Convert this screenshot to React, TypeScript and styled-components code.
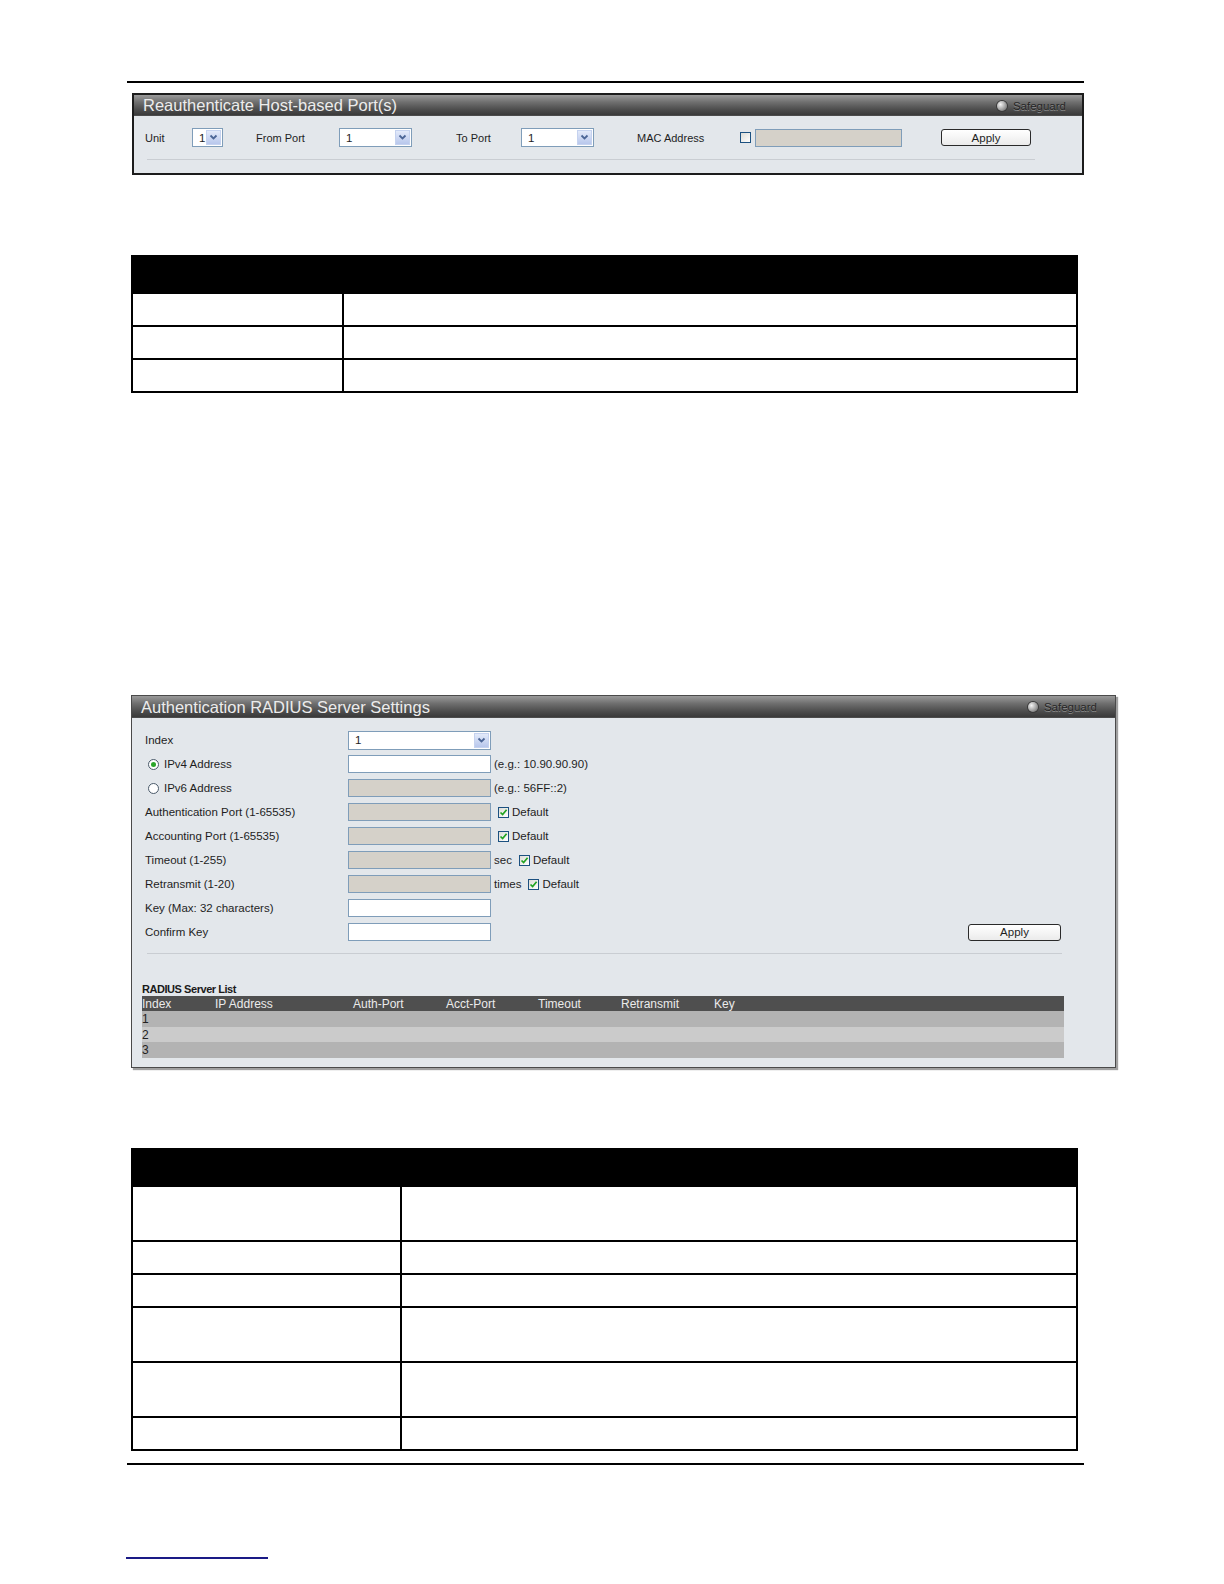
import React from 'react';
import styled, { createGlobalStyle } from 'styled-components';

const Global = createGlobalStyle`
  html, body { margin: 0; padding: 0; background: #ffffff; overflow: hidden; }
  body { font-family: "Liberation Sans", Arial, sans-serif; color: #1e1e1e; }
`;

const Page = styled.div`
  box-sizing: border-box;
  padding: 81px 0 20px 127px;
  display: flex;
  flex-direction: column;
  align-items: flex-start;
`;

const Rule = styled.div<{ $top: number }>`
  width: 957px;
  height: 2px;
  background: #000;
  margin-top: ${(p) => p.$top}px;
`;

const FooterLink = styled.div`
  margin-top: 92px;
  margin-left: -1px;
  width: 142px;
  height: 2px;
  background: #1a1a86;
`;

/* ---------- panels ---------- */

const Panel = styled.section<{ $top: number; $left: number; $width: number; $heavy?: boolean }>`
  margin-top: ${(p) => p.$top}px;
  margin-left: ${(p) => p.$left}px;
  width: ${(p) => p.$width}px;
  box-sizing: border-box;
  border: ${(p) => (p.$heavy ? '2px solid #1c1c1c' : '1px solid #4a4a4a')};
  box-shadow: ${(p) => (p.$heavy ? 'none' : '2px 2px 1px #a0a0a0')};
  background: #e3e7eb;
`;

const PanelHeader = styled.header<{ $h: number; $pr: number }>`
  height: ${(p) => p.$h}px;
  display: flex;
  align-items: center;
  justify-content: space-between;
  padding: 0 ${(p) => p.$pr}px 0 9px;
  background: linear-gradient(to bottom, #9a9a9a 0%, #6e6e6e 35%, #4c4c4c 70%, #3a3a3a 95%, #5a5a5a 100%);
`;

const PanelTitle = styled.h2`
  margin: 0;
  font-weight: normal;
  font-size: 16.5px;
  color: #ececec;
  line-height: 1;
`;

const Safeguard = styled.div`
  display: flex;
  align-items: center;
  gap: 6px;
  font-size: 11.5px;
  color: #262626;
  text-shadow: 0 1px 0 #8a8a8a;
`;

const SafeDot = styled.span`
  width: 10px;
  height: 10px;
  border-radius: 50%;
  background: radial-gradient(circle at 35% 35%, #f4f4f4 0%, #a8a8a8 50%, #5c5c5c 100%);
  box-shadow: 0 0 0 1px #3a3a3a;
`;

const PanelBody = styled.div<{ $pad: string }>`
  padding: ${(p) => p.$pad};
`;

const Separator = styled.div<{ $top: number; $left: number; $width: number }>`
  margin-top: ${(p) => p.$top}px;
  margin-left: ${(p) => p.$left}px;
  width: ${(p) => p.$width}px;
  height: 1px;
  background: #c9cdd2;
`;

/* ---------- controls ---------- */

const Label = styled.span<{ $size?: number }>`
  font-size: ${(p) => p.$size ?? 11}px;
  color: #1e1e1e;
  white-space: nowrap;
`;

const SelectBox = styled.div<{ $w: number }>`
  width: ${(p) => p.$w}px;
  height: 19px;
  box-sizing: border-box;
  border: 1px solid #7f9db9;
  background: #fff;
  display: flex;
  align-items: center;
  padding-left: 6px;
  font-size: 11.5px;
`;

const SelectArrow = styled.span`
  margin-left: auto;
  margin-right: 1px;
  width: 15px;
  height: 15px;
  box-sizing: border-box;
  border: 1px solid #c5d2ef;
  background: linear-gradient(to bottom, #e3eafa, #b8c7ec);
  display: flex;
  align-items: center;
  justify-content: center;
`;

const TextBox = styled.div<{ $w: number; $off?: boolean }>`
  width: ${(p) => p.$w}px;
  height: 18px;
  box-sizing: border-box;
  border: 1px solid #7f9db9;
  background: ${(p) => (p.$off ? '#d5d1c9' : '#ffffff')};
`;

const CheckBox = styled.span`
  width: 11px;
  height: 11px;
  box-sizing: border-box;
  border: 1px solid #1c5180;
  background: linear-gradient(135deg, #dcdcd6, #ffffff);
  display: inline-flex;
  align-items: center;
  justify-content: center;
  flex: none;
`;

const Radio = styled.span<{ $on?: boolean }>`
  width: 11px;
  height: 11px;
  box-sizing: border-box;
  border-radius: 50%;
  border: 1px solid #4a5a6a;
  background: #fff;
  display: inline-flex;
  align-items: center;
  justify-content: center;
  flex: none;
  &::after {
    content: '';
    width: 5px;
    height: 5px;
    border-radius: 50%;
    background: ${(p) => (p.$on ? '#2aa52a' : 'transparent')};
  }
`;

const Button = styled.button<{ $w: number; $h: number }>`
  width: ${(p) => p.$w}px;
  height: ${(p) => p.$h}px;
  box-sizing: border-box;
  border: 1px solid #2a2a2a;
  border-radius: 3px;
  background: linear-gradient(to bottom, #ffffff, #ebebeb);
  font-family: "Liberation Sans", Arial, sans-serif;
  font-size: 11.5px;
  color: #1e1e1e;
  padding: 0;
`;

const Chevron = () => (
  <svg width="9" height="7" viewBox="0 0 9 7">
    <path d="M1.5 1.5 L4.5 4.5 L7.5 1.5" fill="none" stroke="#4b6596" strokeWidth="1.8" />
  </svg>
);

const Tick = () => (
  <svg width="9" height="9" viewBox="0 0 9 9">
    <path d="M1.5 4.5 L3.6 6.6 L7.6 1.8" fill="none" stroke="#21a321" strokeWidth="1.7" />
  </svg>
);

const Select = ({ w, value }: { w: number; value: string }) => (
  <SelectBox $w={w}>
    {value}
    <SelectArrow>
      <Chevron />
    </SelectArrow>
  </SelectBox>
);

/* ---------- panel 1 ---------- */

const PortRow = styled.div`
  display: grid;
  grid-template-columns: 47px 64px 83px 117px 65px 116px 103px 201px 90px;
  align-items: center;
  height: 19px;
`;

const MacCell = styled.div`
  display: flex;
  align-items: center;
  gap: 4px;
`;

/* ---------- panel 2 ---------- */

const FormRow = styled.div`
  display: grid;
  grid-template-columns: 206px 143px 1fr;
  align-items: center;
  height: 24px;
`;

const FormLabel = styled.div<{ $pl: number }>`
  display: flex;
  align-items: center;
  gap: 5px;
  padding-left: ${(p) => p.$pl}px;
`;

const Suffix = styled.div<{ $pl: number }>`
  display: flex;
  align-items: center;
  gap: 3px;
  padding-left: ${(p) => p.$pl}px;
`;

const Unit = styled.span<{ $mr: number }>`
  font-size: 11.5px;
  margin-right: ${(p) => p.$mr}px;
`;

const ApplyCell = styled.div`
  display: flex;
  justify-content: flex-end;
  padding-right: 4px;
`;

const ListTitle = styled.div`
  margin-top: 28px;
  height: 14px;
  line-height: 14px;
  font-size: 11px;
  font-weight: bold;
  letter-spacing: -0.45px;
  color: #1a1a1a;
`;

const ListGrid = styled.div<{ $head?: boolean; $alt?: boolean; $h: number }>`
  width: 922px;
  height: ${(p) => p.$h}px;
  display: grid;
  grid-template-columns: 73px 138px 93px 92px 83px 93px 1fr;
  align-items: center;
  font-size: 12px;
  background: ${(p) => (p.$head ? '#4f4f4f' : p.$alt ? '#cbcbcb' : '#b3b3b3')};
  color: ${(p) => (p.$head ? '#ebebeb' : '#222')};
`;

/* ---------- doc tables ---------- */

const DocTable = styled.table<{ $top: number }>`
  margin-top: ${(p) => p.$top}px;
  margin-left: 4px;
  width: 947px;
  border-collapse: collapse;
  table-layout: fixed;
`;

const HeadCell = styled.th`
  background: #000;
  border: 2px solid #000;
  height: 37px;
  padding: 0;
  box-sizing: border-box;
`;

const Cell = styled.td<{ $h: number }>`
  border: 2px solid #000;
  height: ${(p) => p.$h}px;
  padding: 0;
  box-sizing: border-box;
`;

const Table = ({ top, col, rows }: { top: number; col: number; rows: number[] }) => (
  <DocTable $top={top}>
    <colgroup>
      <col style={{ width: col }} />
      <col />
    </colgroup>
    <thead>
      <tr>
        <HeadCell colSpan={2} />
      </tr>
    </thead>
    <tbody>
      {rows.map((h, i) => (
        <tr key={i}>
          <Cell $h={h} />
          <Cell $h={h} />
        </tr>
      ))}
    </tbody>
  </DocTable>
);

const F = 11.5;

export default function App() {
  return (
    <>
      <Global />
      <Page>
        <Rule $top={0} />

        <Panel $top={10} $left={5} $width={952} $heavy>
          <PanelHeader $h={21} $pr={16}>
            <PanelTitle>Reauthenticate Host-based Port(s)</PanelTitle>
            <Safeguard>
              <SafeDot />
              Safeguard
            </Safeguard>
          </PanelHeader>
          <PanelBody $pad="12px 0 13px 11px">
            <PortRow>
              <Label>Unit</Label>
              <Select w={31} value="1" />
              <Label>From Port</Label>
              <Select w={73} value="1" />
              <Label>To Port</Label>
              <Select w={73} value="1" />
              <Label>MAC Address</Label>
              <MacCell>
                <CheckBox />
                <TextBox $w={147} $off />
              </MacCell>
              <Button $w={90} $h={17}>Apply</Button>
            </PortRow>
            <Separator $top={12} $left={2} $width={888} />
          </PanelBody>
        </Panel>

        <Table top={80} col={211} rows={[33, 33, 33]} />

        <Panel $top={302} $left={4} $width={985}>
          <PanelHeader $h={22} $pr={18}>
            <PanelTitle>Authentication RADIUS Server Settings</PanelTitle>
            <Safeguard>
              <SafeDot />
              Safeguard
            </Safeguard>
          </PanelHeader>
          <PanelBody $pad="10px 50px 9px 10px">
            <FormRow>
              <FormLabel $pl={3}><Label $size={F}>Index</Label></FormLabel>
              <Select w={143} value="1" />
              <div />
            </FormRow>
            <FormRow>
              <FormLabel $pl={6}><Radio $on /><Label $size={F}>IPv4 Address</Label></FormLabel>
              <TextBox $w={143} />
              <Suffix $pl={3}><Label $size={F}>(e.g.: 10.90.90.90)</Label></Suffix>
            </FormRow>
            <FormRow>
              <FormLabel $pl={6}><Radio /><Label $size={F}>IPv6 Address</Label></FormLabel>
              <TextBox $w={143} $off />
              <Suffix $pl={3}><Label $size={F}>(e.g.: 56FF::2)</Label></Suffix>
            </FormRow>
            <FormRow>
              <FormLabel $pl={3}><Label $size={F}>Authentication Port (1-65535)</Label></FormLabel>
              <TextBox $w={143} $off />
              <Suffix $pl={7}><CheckBox><Tick /></CheckBox><Label $size={F}>Default</Label></Suffix>
            </FormRow>
            <FormRow>
              <FormLabel $pl={3}><Label $size={F}>Accounting Port (1-65535)</Label></FormLabel>
              <TextBox $w={143} $off />
              <Suffix $pl={7}><CheckBox><Tick /></CheckBox><Label $size={F}>Default</Label></Suffix>
            </FormRow>
            <FormRow>
              <FormLabel $pl={3}><Label $size={F}>Timeout (1-255)</Label></FormLabel>
              <TextBox $w={143} $off />
              <Suffix $pl={3}><Unit $mr={4}>sec</Unit><CheckBox><Tick /></CheckBox><Label $size={F}>Default</Label></Suffix>
            </FormRow>
            <FormRow>
              <FormLabel $pl={3}><Label $size={F}>Retransmit (1-20)</Label></FormLabel>
              <TextBox $w={143} $off />
              <Suffix $pl={3}><Unit $mr={4}>times</Unit><CheckBox><Tick /></CheckBox><Label $size={F}>Default</Label></Suffix>
            </FormRow>
            <FormRow>
              <FormLabel $pl={3}><Label $size={F}>Key (Max: 32 characters)</Label></FormLabel>
              <TextBox $w={143} />
              <div />
            </FormRow>
            <FormRow>
              <FormLabel $pl={3}><Label $size={F}>Confirm Key</Label></FormLabel>
              <TextBox $w={143} />
              <ApplyCell>
                <Button $w={93} $h={17}>Apply</Button>
              </ApplyCell>
            </FormRow>
            <Separator $top={9} $left={5} $width={915} />
            <ListTitle>RADIUS Server List</ListTitle>
            <ListGrid $head $h={15}>
              <span>Index</span>
              <span>IP Address</span>
              <span>Auth-Port</span>
              <span>Acct-Port</span>
              <span>Timeout</span>
              <span>Retransmit</span>
              <span>Key</span>
            </ListGrid>
            <ListGrid $h={16}><span>1</span></ListGrid>
            <ListGrid $alt $h={15}><span>2</span></ListGrid>
            <ListGrid $h={16}><span>3</span></ListGrid>
          </PanelBody>
        </Panel>

        <Table top={80} col={269} rows={[55, 33, 33, 55, 55, 33]} />

        <Rule $top={12} />
        <FooterLink />
      </Page>
    </>
  );
}
